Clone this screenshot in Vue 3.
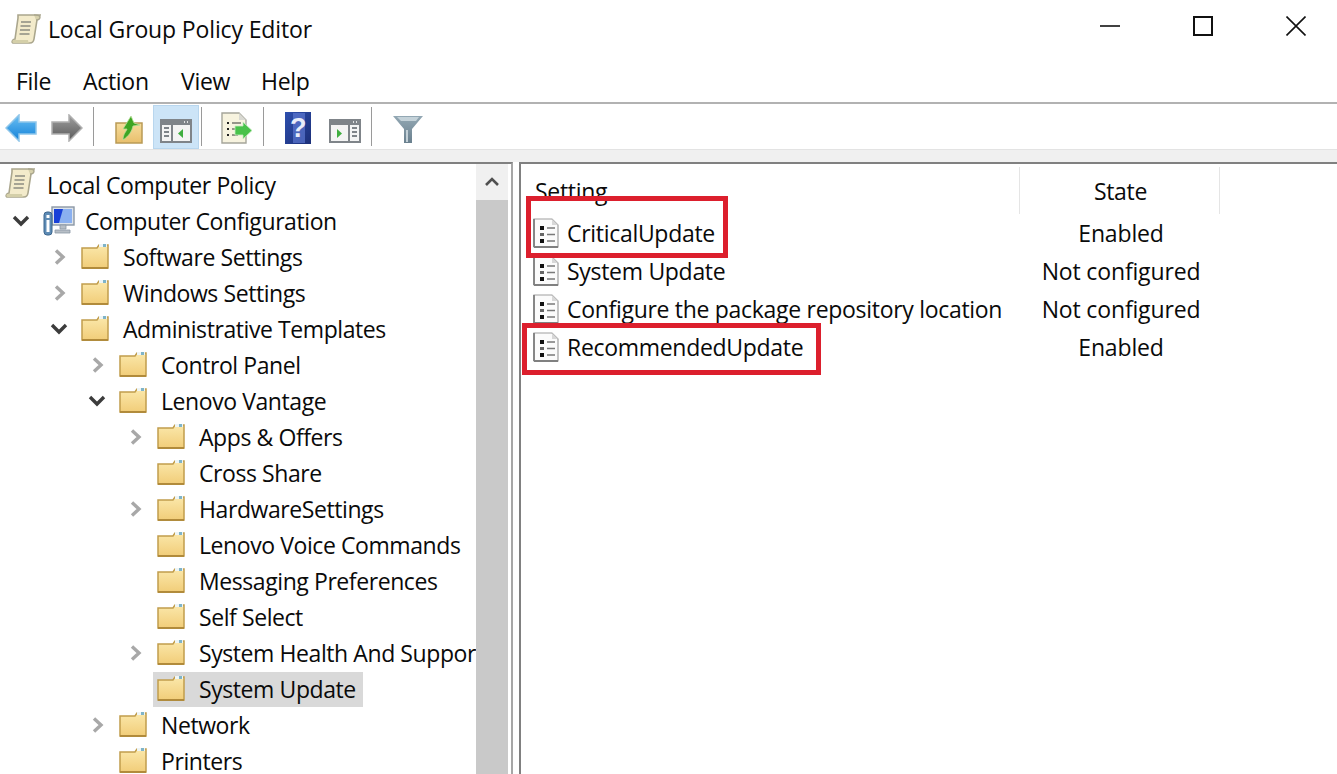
<script setup>
const menus = ['File', 'Action', 'View', 'Help']
const tree = [
  { level: 0, icon: 'scroll', label: 'Local Computer Policy', arrow: '' },
  { level: 1, icon: 'computer', label: 'Computer Configuration', arrow: 'open' },
  { level: 2, icon: 'folder', label: 'Software Settings', arrow: 'closed' },
  { level: 2, icon: 'folder', label: 'Windows Settings', arrow: 'closed' },
  { level: 2, icon: 'folder', label: 'Administrative Templates', arrow: 'open' },
  { level: 3, icon: 'folder', label: 'Control Panel', arrow: 'closed' },
  { level: 3, icon: 'folder', label: 'Lenovo Vantage', arrow: 'open' },
  { level: 4, icon: 'folder', label: 'Apps & Offers', arrow: 'closed' },
  { level: 4, icon: 'folder', label: 'Cross Share', arrow: '' },
  { level: 4, icon: 'folder', label: 'HardwareSettings', arrow: 'closed' },
  { level: 4, icon: 'folder', label: 'Lenovo Voice Commands', arrow: '' },
  { level: 4, icon: 'folder', label: 'Messaging Preferences', arrow: '' },
  { level: 4, icon: 'folder', label: 'Self Select', arrow: '' },
  { level: 4, icon: 'folder', label: 'System Health And Support', arrow: 'closed' },
  { level: 4, icon: 'folder', label: 'System Update', arrow: '', selected: true },
  { level: 3, icon: 'folder', label: 'Network', arrow: 'closed' },
  { level: 3, icon: 'folder', label: 'Printers', arrow: '' },
]
const settings = [
  { name: 'CriticalUpdate', state: 'Enabled' },
  { name: 'System Update', state: 'Not configured' },
  { name: 'Configure the package repository location', state: 'Not configured' },
  { name: 'RecommendedUpdate', state: 'Enabled' },
]
const indent = (row) => ({ paddingLeft: 5 + 38 * Math.max(row.level - 1, 0) + 'px' })
</script>

<template>
  <svg class="defs" width="0" height="0" aria-hidden="true">
    <defs>
      <linearGradient id="gFolder" x1="0" y1="0" x2="0" y2="1">
        <stop offset="0" stop-color="#fbe8ab" />
        <stop offset="1" stop-color="#f1cd79" />
      </linearGradient>
      <linearGradient id="gUp" x1="0" y1="0" x2="0" y2="1">
        <stop offset="0" stop-color="#f6dd9c" />
        <stop offset="1" stop-color="#e8bf6c" />
      </linearGradient>
      <linearGradient id="gBack" x1="0" y1="0" x2="0" y2="1">
        <stop offset="0" stop-color="#6cc0f3" />
        <stop offset="1" stop-color="#1180d8" />
      </linearGradient>
      <linearGradient id="gFwd" x1="0" y1="0" x2="0" y2="1">
        <stop offset="0" stop-color="#a0a0a0" />
        <stop offset="1" stop-color="#585858" />
      </linearGradient>
      <linearGradient id="gHelp" x1="0" y1="0" x2="1" y2="1">
        <stop offset="0" stop-color="#2d4fae" />
        <stop offset="1" stop-color="#1c2f78" />
      </linearGradient>
      <linearGradient id="gFunnel" x1="0" y1="0" x2="0" y2="1">
        <stop offset="0" stop-color="#93a8b4" />
        <stop offset="1" stop-color="#6a808e" />
      </linearGradient>
      <symbol id="folder" viewBox="0 0 28 26">
        <path d="M1 5h15l2-3h9v23H1z" fill="url(#gFolder)" stroke="#c19d4c" stroke-width="1.500" />
        <rect x="18" y="1" width="8" height="3" fill="#eef5f6" />
        <rect x="22" y="1" width="3" height="3" fill="#7fb4c8" />
        <path d="M1 25h26" stroke="#ae8737" stroke-width="1.800" />
      </symbol>
      <symbol id="scroll" viewBox="0 0 30 30">
        <path d="M7 1h22l-3 5-3 19c-.5 3-2 4-4 4H2c-1.500 0-1-4 2-4L7 4z" fill="#f3ebcb" stroke="#aaa68d" stroke-width="1.600" />
        <path d="M23 1c3 0 6 0 6 2s-2 3-4 3" fill="#d7d1ac" stroke="#aaa68d" stroke-width="1.400" />
        <path d="M10 8h10M9.500 12h10M9 16h10M8.500 20h10" stroke="#8d8d83" stroke-width="1.700" />
        <path d="M2 26h15c0 2 1 3 2 3H3c-2 0-2-2-1-3z" fill="#d4cfa9" />
      </symbol>
      <symbol id="computer" viewBox="0 0 32 30">
        <rect x="9" y="1" width="22" height="18" fill="#dde3ea" stroke="#8b97a5" stroke-width="1.400" />
        <path d="M11 3h18v14H11z" fill="#1840d8" />
        <path d="M20 3h9v14H16z" fill="#8ab0f0" />
        <path d="M17 19h6v4h-6zM12 24h15v3H12z" fill="#b7bec6" stroke="#8b97a5" stroke-width=".8" />
        <rect x="1" y="6" width="8" height="23" rx="3" fill="#5d8bb5" stroke="#3d668e" />
        <rect x="3.500" y="9" width="3" height="3" fill="#fff" />
        <rect x="3.500" y="14" width="3" height="12" fill="#fff" />
      </symbol>
      <symbol id="doc" viewBox="0 0 26 30">
        <path d="M1 1h18l6 6v22H1z" fill="#fbfbfb" stroke="#a0a0a0" stroke-width="1.200" />
        <path d="M1 29V1M1 29h24" stroke="#808080" stroke-width="1.800" />
        <path d="M19 1v6h6z" fill="#d8d8d8" />
        <path d="M7 8h4v4H7zM7 21h4v4H7z" fill="#111" />
        <path d="M7 15h4v3H7z" fill="#666" />
        <path d="M14 10h8M14 16.500h8M14 23h8" stroke="#7a7a7a" stroke-width="1.500" />
      </symbol>
      <symbol id="back" viewBox="0 0 32 28">
        <path d="M1 14 14 1v7h17v12H14v7z" fill="url(#gBack)" stroke="#8fc6ea" stroke-width="1.500" />
      </symbol>
      <symbol id="fwd" viewBox="0 0 32 28">
        <path d="M31 14 18 1v7H1v12h17v7z" fill="url(#gFwd)" stroke="#b0b0b0" stroke-width="1.500" />
      </symbol>
      <symbol id="upfolder" viewBox="0 0 28 30">
        <path d="M1 9h26v20H1z" fill="url(#gUp)" stroke="#b99a55" stroke-width="1.500" />
        <path d="M8 26c0-6 3-8 4-11l-4 0 8-13 3 7 6 2-7 1c-1 5-4 10-10 14z" fill="#3ea524" stroke="#b7e09a" stroke-width=".8" />
      </symbol>
      <symbol id="paneleft" viewBox="0 0 32 24">
        <rect x="1" y="1" width="30" height="22" fill="#f4f4f4" stroke="#7f8489" stroke-width="2" />
        <rect x="1" y="1" width="30" height="5" fill="#7f8489" />
        <path d="M24 3h1M27 3h1" stroke="#fff" stroke-width="1.500" />
        <rect x="11" y="6" width="2" height="17" fill="#7f8489" />
        <path d="M4 9h5M4 13h5M4 17h5" stroke="#7f8489" stroke-width="2" />
        <path d="M23 10v9l-5-4.500z" fill="#3fae3f" />
      </symbol>
      <symbol id="paneright" viewBox="0 0 32 24">
        <rect x="1" y="1" width="30" height="22" fill="#f4f4f4" stroke="#7f8489" stroke-width="2" />
        <rect x="1" y="1" width="30" height="5" fill="#7f8489" />
        <path d="M24 3h1M27 3h1" stroke="#fff" stroke-width="1.500" />
        <rect x="19" y="6" width="2" height="17" fill="#7f8489" />
        <path d="M23 9h5M23 13h5M23 17h5" stroke="#7f8489" stroke-width="2" />
        <path d="M8 10v9l5-4.500z" fill="#3fae3f" />
      </symbol>
      <symbol id="export" viewBox="0 0 32 32">
        <path d="M1 1h17l7 7v23H1z" fill="#f7f3df" stroke="#a5a59a" stroke-width="1.400" />
        <path d="M18 1v7h7z" fill="#d9d9d2" />
        <path d="M6 11h2M6 17h2M6 23h2" stroke="#222" stroke-width="2" />
        <path d="M11 11h9M11 17h6M11 23h6" stroke="#77776e" stroke-width="1.500" />
        <path d="M14 14h8l0-4 9 8.500-9 8.500 0-4h-8z" fill="#49c24a" stroke="#c6ecc0" stroke-width=".8" />
      </symbol>
      <symbol id="help" viewBox="0 0 26 32">
        <rect width="26" height="32" fill="url(#gHelp)" />
        <path d="M8 1h12v30H8z" fill="#5d78d0" opacity=".7" />
        <text x="13" y="25" text-anchor="middle" font-family="'Liberation Sans', sans-serif" font-weight="700" font-size="27" fill="#e9edf9">?</text>
      </symbol>
      <symbol id="funnel" viewBox="0 0 30 28">
        <path d="M0 1h30L19 14v14h-8V14z" fill="url(#gFunnel)" />
        <path d="M4 2h22l-3 4H8z" fill="#c4d2d9" />
        <path d="M13 15h2v12h-2z" fill="#c3d0d7" />
      </symbol>
    </defs>
  </svg>

  <div class="window">
    <header class="titlebar">
      <svg class="title-icon"><use href="#scroll" /></svg>
      <span class="title">Local Group Policy Editor</span>
      <div class="controls">
        <svg width="20" height="20" viewBox="0 0 20 20"><path d="M0 10h20" stroke="#111" stroke-width="1.600" /></svg>
        <svg width="20" height="20" viewBox="0 0 20 20"><rect x="1" y="1" width="18" height="18" fill="none" stroke="#111" stroke-width="2" /></svg>
        <svg width="20" height="20" viewBox="0 0 20 20"><path d="M.5.500l19 19M19.500.500l-19 19" stroke="#111" stroke-width="1.600" /></svg>
      </div>
    </header>

    <nav class="menubar">
      <span v-for="m in menus" :key="m">{{ m }}</span>
    </nav>

    <div class="toolbar">
      <svg class="tb back"><use href="#back" /></svg>
      <svg class="tb fwd"><use href="#fwd" /></svg>
      <i class="sep s1"></i>
      <svg class="tb up"><use href="#upfolder" /></svg>
      <span class="active"><svg class="pane"><use href="#paneleft" /></svg></span>
      <i class="sep s2"></i>
      <svg class="tb exp"><use href="#export" /></svg>
      <i class="sep s3"></i>
      <svg class="tb hlp"><use href="#help" /></svg>
      <svg class="pane pr"><use href="#paneright" /></svg>
      <i class="sep s4"></i>
      <svg class="tb fun"><use href="#funnel" /></svg>
    </div>

    <div class="strip"></div>

    <main class="panes">
      <section class="left">
        <div class="tree">
          <div v-for="row in tree" :key="row.label" class="node" :style="indent(row)">
            <span v-if="row.level > 0" class="arrow">
              <svg v-if="row.arrow === 'open'" width="18" height="12" viewBox="0 0 18 12"><path d="M2 2l7 7 7-7" fill="none" stroke="#3c3c3c" stroke-width="3.400" /></svg>
              <svg v-else-if="row.arrow === 'closed'" class="closed" width="12" height="16" viewBox="0 0 12 16"><path d="M2 1.500l7 6.500-7 6.500" fill="none" stroke="#a8a8a8" stroke-width="3.400" /></svg>
            </span>
            <span class="label" :class="{ selected: row.selected }">
              <svg class="node-icon" :class="row.icon"><use :href="'#' + row.icon" /></svg>
              <span>{{ row.label }}</span>
            </span>
          </div>
        </div>
        <div class="scrollbar">
          <div class="scroll-btn">
            <svg width="14" height="10" viewBox="0 0 14 10"><path d="M1 8l6-6 6 6" fill="none" stroke="#505050" stroke-width="2.600" /></svg>
          </div>
          <div class="scroll-track"></div>
        </div>
      </section>

      <section class="right">
        <div class="head">
          <div class="col-name">Setting</div>
          <div class="col-state">State</div>
        </div>
        <div v-for="s in settings" :key="s.name" class="row">
          <div class="cell-name"><svg class="doc"><use href="#doc" /></svg>{{ s.name }}</div>
          <div class="cell-state">{{ s.state }}</div>
        </div>
        <div class="mark m1"></div>
        <div class="mark m2"></div>
      </section>
    </main>
  </div>
</template>

<style>
html, body { margin: 0; overflow: hidden; background: #fff; }
</style>

<style scoped>
.defs { position: absolute; }
.window {
  width: 1337px;
  height: 774px;
  display: flex;
  flex-direction: column;
  overflow: hidden;
  background: #fff;
  color: #0a0a0a;
  font-family: "Open Sans", "Noto Sans", sans-serif;
  font-size: 23px;
  letter-spacing: -0.3px;
}
.titlebar {
  height: 58px;
  flex: none;
  display: flex;
  align-items: center;
  padding-left: 11px;
}
.title { letter-spacing: -0.14px; }
.title-icon { width: 30px; height: 30px; margin-right: 7px; }
.controls {
  margin-left: auto;
  display: flex;
  gap: 73px;
  padding-right: 31px;
  margin-top: -6px;
}
.menubar {
  height: 44px;
  flex: none;
  display: flex;
  align-items: center;
  padding: 2px 0 0 16px;
  box-sizing: border-box;
}
.menubar span:nth-child(1) { width: 67px; }
.menubar span:nth-child(2) { width: 98px; }
.menubar span:nth-child(3) { width: 80px; }
.toolbar {
  height: 48px;
  flex: none;
  box-sizing: border-box;
  border-top: 2px solid #b2b2b2;
  border-bottom: 1px solid #e3e3e3;
  display: flex;
  align-items: center;
  padding-left: 5px;
}
.tb { flex: none; }
.back, .fwd { width: 32px; height: 28px; margin-top: 3px; }
.fwd { margin-left: 14px; }
.sep { width: 1px; height: 39px; background: #9a9a9a; flex: none; }
.s1 { margin-left: 10px; }
.up { width: 28px; height: 30px; margin-left: 21px; margin-top: 5px; }
.active {
  flex: none;
  width: 46px;
  height: 44px;
  box-sizing: border-box;
  margin-left: 10px;
  background: #cce4f7;
  border: 1px solid #b8d6ee;
  display: flex;
  justify-content: center;
  align-items: flex-end;
  padding-bottom: 5px;
}
.pane { width: 32px; height: 24px; flex: none; }
.s2 { margin-left: 2px; }
.exp { width: 32px; height: 32px; margin-left: 19px; margin-top: 3px; }
.s3 { margin-left: 10px; }
.hlp { width: 26px; height: 32px; margin-left: 21px; margin-top: 3px; }
.pr { margin-left: 18px; margin-top: 9px; }
.s4 { margin-left: 10px; }
.fun { width: 30px; height: 28px; margin-left: 21px; margin-top: 5px; }
.strip { height: 12px; flex: none; background: #f0f0f0; }
.panes {
  flex: 1;
  min-height: 0;
  display: flex;
  position: relative;
}
.left {
  width: 513px;
  flex: none;
  box-sizing: border-box;
  border-top: 2px solid #808080;
  border-right: 2px solid #a6a6a6;
  display: flex;
  padding-right: 3px;
  overflow: hidden;
}
.tree { flex: 1; min-width: 0; overflow: hidden; padding-top: 3px; letter-spacing: -0.42px; }
.node {
  height: 36px;
  display: flex;
  align-items: center;
  white-space: nowrap;
  box-sizing: border-box;
}
.arrow {
  width: 38px;
  flex: none;
  display: flex;
  align-items: center;
  padding-left: 7px;
  box-sizing: border-box;
}
.arrow .closed { margin-left: 4px; }
.label { display: flex; align-items: center; height: 100%; }
.label.selected {
  background: #d9d9d9;
  margin-left: -4px;
  padding: 0 7px 0 4px;
  height: 35px;
}
.node-icon { flex: none; width: 28px; height: 26px; margin-right: 14px; margin-top: -3px; }
.node-icon.scroll { width: 30px; height: 30px; margin-right: 12px; margin-top: -4px; }
.node-icon.computer { width: 32px; height: 30px; margin-right: 10px; margin-top: -1px; }
.scrollbar {
  width: 32px;
  flex: none;
  display: flex;
  flex-direction: column;
}
.scroll-btn {
  height: 36px;
  flex: none;
  background: #f0f0f0;
  display: flex;
  align-items: center;
  justify-content: center;
}
.scroll-track { flex: 1; background: #c9c9c9; }
.right {
  flex: 1;
  margin-left: 6px;
  border-top: 2px solid #808080;
  border-left: 2px solid #808080;
  position: relative;
}
.head {
  height: 50px;
  display: flex;
  box-sizing: border-box;
  padding-top: 3px;
}
.col-name {
  width: 499px;
  padding-left: 14px;
  box-sizing: border-box;
  line-height: 48px;
  border-right: 1px solid #e5e5e5;
}
.col-state {
  width: 200px;
  padding-left: 2px;
  box-sizing: border-box;
  text-align: center;
  line-height: 48px;
  border-right: 1px solid #e5e5e5;
}
.row { height: 38px; display: flex; align-items: center; white-space: nowrap; }
.cell-name {
  width: 500px;
  display: flex;
  align-items: center;
  padding-left: 12px;
  box-sizing: border-box;
}
.doc { width: 26px; height: 30px; margin-right: 8px; flex: none; }
.cell-state { width: 200px; text-align: center; letter-spacing: -0.15px; }
.mark {
  position: absolute;
  box-sizing: border-box;
  border: 5px solid #dc1f2d;
  pointer-events: none;
}
.m1 { left: 5px; top: 32px; width: 202px; height: 62px; }
.m2 { left: 1px; top: 159px; width: 299px; height: 52px; }
</style>
